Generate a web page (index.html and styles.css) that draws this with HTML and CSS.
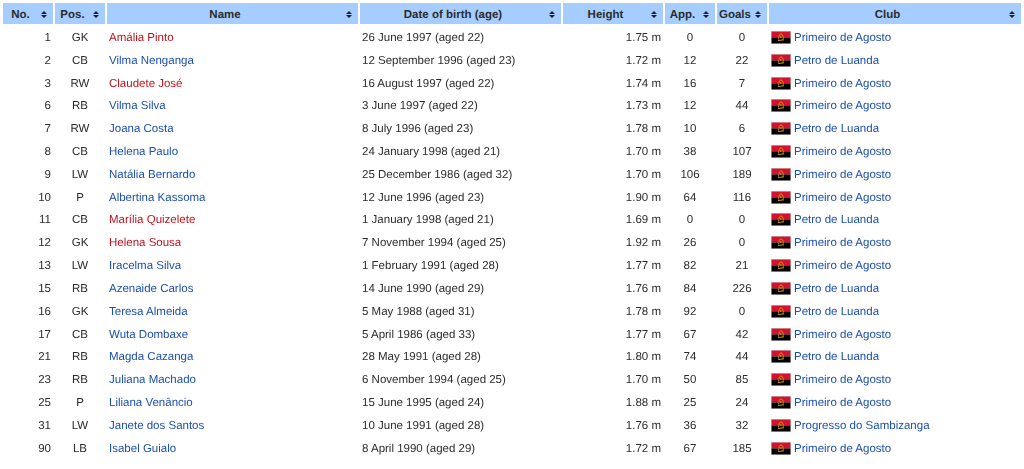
FILE: index.html
```html
<!DOCTYPE html>
<html lang="en">
<head>
<meta charset="utf-8">
<title>Squad</title>
<link rel="stylesheet" href="styles.css">
</head>
<body>
<svg class="defs" width="0" height="0" aria-hidden="true">
<symbol id="sort" viewBox="0 0 6 7"><path d="M3 0 6 3H0ZM3 7 0 4H6Z" fill="#202122"/></symbol>
<symbol id="flag" viewBox="0 0 20 13"><rect width="20" height="13" fill="#c4c4c4"/><rect x=".6" y=".6" width="18.8" height="5.9" fill="#d4122f"/><rect x=".6" y="6.5" width="18.8" height="5.9" fill="#000"/><path d="M7.6 8.6C7.4 5.4 8.8 3 10 2.8 11.8 3.2 12.8 6 12 8.8" fill="none" stroke="#d9a800" stroke-width=".8"/><path d="M7 9.6 13 8.8" stroke="#d9a800" stroke-width=".9"/><circle cx="9.8" cy="6" r=".8" fill="#d9a800"/></symbol>
</svg>
<table class="squad">
<colgroup><col class="c-no"><col class="c-pos"><col class="c-name"><col class="c-dob"><col class="c-h"><col class="c-app"><col class="c-goals"><col class="c-club"></colgroup>
<thead><tr>
<th>No.<svg class="si"><use href="#sort"/></svg></th>
<th>Pos.<svg class="si"><use href="#sort"/></svg></th>
<th>Name<svg class="si"><use href="#sort"/></svg></th>
<th>Date of birth (age)<svg class="si"><use href="#sort"/></svg></th>
<th>Height<svg class="si"><use href="#sort"/></svg></th>
<th>App.<svg class="si"><use href="#sort"/></svg></th>
<th>Goals<svg class="si"><use href="#sort"/></svg></th>
<th>Club<svg class="si"><use href="#sort"/></svg></th>
</tr></thead>
<tbody id="rows">
<tr><td class="r">1</td><td class="c">GK</td><td><a class="new">Amália Pinto</a></td><td>26 June 1997 (aged 22)</td><td class="r">1.75 m</td><td class="c">0</td><td class="c">0</td><td><svg class="fl"><use href="#flag"/></svg><a>Primeiro de Agosto</a></td></tr>
<tr><td class="r">2</td><td class="c">CB</td><td><a>Vilma Nenganga</a></td><td>12 September 1996 (aged 23)</td><td class="r">1.72 m</td><td class="c">12</td><td class="c">22</td><td><svg class="fl"><use href="#flag"/></svg><a>Petro de Luanda</a></td></tr>
<tr><td class="r">3</td><td class="c">RW</td><td><a class="new">Claudete José</a></td><td>16 August 1997 (aged 22)</td><td class="r">1.74 m</td><td class="c">16</td><td class="c">7</td><td><svg class="fl"><use href="#flag"/></svg><a>Primeiro de Agosto</a></td></tr>
<tr><td class="r">6</td><td class="c">RB</td><td><a>Vilma Silva</a></td><td>3 June 1997 (aged 22)</td><td class="r">1.73 m</td><td class="c">12</td><td class="c">44</td><td><svg class="fl"><use href="#flag"/></svg><a>Primeiro de Agosto</a></td></tr>
<tr><td class="r">7</td><td class="c">RW</td><td><a>Joana Costa</a></td><td>8 July 1996 (aged 23)</td><td class="r">1.78 m</td><td class="c">10</td><td class="c">6</td><td><svg class="fl"><use href="#flag"/></svg><a>Petro de Luanda</a></td></tr>
<tr><td class="r">8</td><td class="c">CB</td><td><a>Helena Paulo</a></td><td>24 January 1998 (aged 21)</td><td class="r">1.70 m</td><td class="c">38</td><td class="c">107</td><td><svg class="fl"><use href="#flag"/></svg><a>Primeiro de Agosto</a></td></tr>
<tr><td class="r">9</td><td class="c">LW</td><td><a>Natália Bernardo</a></td><td>25 December 1986 (aged 32)</td><td class="r">1.70 m</td><td class="c">106</td><td class="c">189</td><td><svg class="fl"><use href="#flag"/></svg><a>Primeiro de Agosto</a></td></tr>
<tr><td class="r">10</td><td class="c">P</td><td><a>Albertina Kassoma</a></td><td>12 June 1996 (aged 23)</td><td class="r">1.90 m</td><td class="c">64</td><td class="c">116</td><td><svg class="fl"><use href="#flag"/></svg><a>Primeiro de Agosto</a></td></tr>
<tr><td class="r">11</td><td class="c">CB</td><td><a class="new">Marília Quizelete</a></td><td>1 January 1998 (aged 21)</td><td class="r">1.69 m</td><td class="c">0</td><td class="c">0</td><td><svg class="fl"><use href="#flag"/></svg><a>Petro de Luanda</a></td></tr>
<tr><td class="r">12</td><td class="c">GK</td><td><a class="new">Helena Sousa</a></td><td>7 November 1994 (aged 25)</td><td class="r">1.92 m</td><td class="c">26</td><td class="c">0</td><td><svg class="fl"><use href="#flag"/></svg><a>Primeiro de Agosto</a></td></tr>
<tr><td class="r">13</td><td class="c">LW</td><td><a>Iracelma Silva</a></td><td>1 February 1991 (aged 28)</td><td class="r">1.77 m</td><td class="c">82</td><td class="c">21</td><td><svg class="fl"><use href="#flag"/></svg><a>Primeiro de Agosto</a></td></tr>
<tr><td class="r">15</td><td class="c">RB</td><td><a>Azenaide Carlos</a></td><td>14 June 1990 (aged 29)</td><td class="r">1.76 m</td><td class="c">84</td><td class="c">226</td><td><svg class="fl"><use href="#flag"/></svg><a>Petro de Luanda</a></td></tr>
<tr><td class="r">16</td><td class="c">GK</td><td><a>Teresa Almeida</a></td><td>5 May 1988 (aged 31)</td><td class="r">1.78 m</td><td class="c">92</td><td class="c">0</td><td><svg class="fl"><use href="#flag"/></svg><a>Petro de Luanda</a></td></tr>
<tr><td class="r">17</td><td class="c">CB</td><td><a>Wuta Dombaxe</a></td><td>5 April 1986 (aged 33)</td><td class="r">1.77 m</td><td class="c">67</td><td class="c">42</td><td><svg class="fl"><use href="#flag"/></svg><a>Primeiro de Agosto</a></td></tr>
<tr><td class="r">21</td><td class="c">RB</td><td><a>Magda Cazanga</a></td><td>28 May 1991 (aged 28)</td><td class="r">1.80 m</td><td class="c">74</td><td class="c">44</td><td><svg class="fl"><use href="#flag"/></svg><a>Petro de Luanda</a></td></tr>
<tr><td class="r">23</td><td class="c">RB</td><td><a>Juliana Machado</a></td><td>6 November 1994 (aged 25)</td><td class="r">1.70 m</td><td class="c">50</td><td class="c">85</td><td><svg class="fl"><use href="#flag"/></svg><a>Primeiro de Agosto</a></td></tr>
<tr><td class="r">25</td><td class="c">P</td><td><a>Liliana Venâncio</a></td><td>15 June 1995 (aged 24)</td><td class="r">1.88 m</td><td class="c">25</td><td class="c">24</td><td><svg class="fl"><use href="#flag"/></svg><a>Primeiro de Agosto</a></td></tr>
<tr><td class="r">31</td><td class="c">LW</td><td><a>Janete dos Santos</a></td><td>10 June 1991 (aged 28)</td><td class="r">1.76 m</td><td class="c">36</td><td class="c">32</td><td><svg class="fl"><use href="#flag"/></svg><a>Progresso do Sambizanga</a></td></tr>
<tr><td class="r">90</td><td class="c">LB</td><td><a>Isabel Guialo</a></td><td>8 April 1990 (aged 29)</td><td class="r">1.72 m</td><td class="c">67</td><td class="c">185</td><td><svg class="fl"><use href="#flag"/></svg><a>Primeiro de Agosto</a></td></tr>
</tbody>
</table>
</body>
</html>
```
FILE: styles.css
```css
html, body { margin: 0; padding: 0; background: #fff; }
body { padding: 1px 1px 0 1px; font-family: "Liberation Sans", Arial, sans-serif; font-size: 11.5px; color: #2b2c2d; overflow: hidden; text-rendering: geometricPrecision; }
.defs { position: absolute; }
.squad { border-collapse: separate; border-spacing: 2px; table-layout: fixed; width: 1022px; filter: blur(.35px); }
.c-no, .c-pos, .c-app, .c-goals { width: 50px; }
.c-name { width: 251px; }
.c-dob { width: 201px; }
.c-h { width: 100px; }
.c-club { width: 252px; }
th { position: relative; height: 19.45px; padding: 2px 17px 0 2px; background: #a6cdff; font-weight: bold; text-align: center; white-space: nowrap; }
.si { position: absolute; right: 6px; top: 8px; width: 6px; height: 7px; }
td { height: 18.83px; padding: 2px 2px 0; line-height: 14px; white-space: nowrap; }
.r { text-align: right; }
.c { text-align: center; }
a { color: #1c50b0; text-decoration: none; }
a.new { color: #c0141c; }
.fl { width: 20px; height: 13px; vertical-align: -3px; margin-right: 3px; }
```
